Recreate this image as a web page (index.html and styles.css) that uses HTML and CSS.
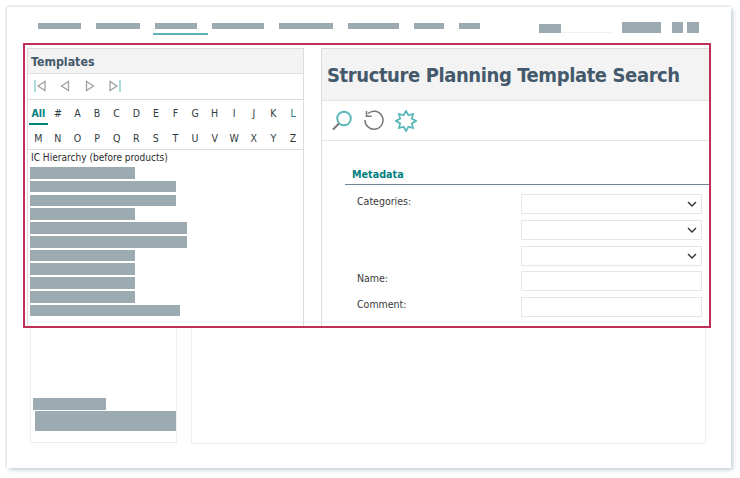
FILE: index.html
```html
<!DOCTYPE html>
<html lang="en">
<head>
<meta charset="utf-8">
<title>Structure Planning Template Search</title>
<link rel="stylesheet" href="styles.css">
</head>
<body>
<div class="sheet">
  <header class="topnav">
    <span class="tab t1"></span>
    <span class="tab t2"></span>
    <span class="tab-active"><span class="tab t3"></span></span>
    <span class="tab t4"></span>
    <span class="tab t5"></span>
    <span class="tab t6"></span>
    <span class="tab t7"></span>
    <span class="tab t8"></span>
    <span class="searchbox"><span class="searchfill"></span></span>
    <span class="btn b1"></span>
    <span class="btn b2"></span>
    <span class="btn b3"></span>
  </header>

  <main class="focus">
    <section class="left">
      <div class="left-head">Templates</div>
      <div class="pager">
        <svg class="pg" width="12" height="12" viewBox="0 0 12 12"><path class="teal" d="M1 0v12"/><path class="gray" d="M11 1.500v9L4 6z"/></svg>
        <svg class="pg" width="12" height="12" viewBox="0 0 12 12"><path class="gray" d="M9.500 1.500v9L2.500 6z"/></svg>
        <svg class="pg" width="12" height="12" viewBox="0 0 12 12"><path class="gray" d="M2.500 1.500v9L9.500 6z"/></svg>
        <svg class="pg" width="12" height="12" viewBox="0 0 12 12"><path class="gray" d="M1 1.500v9L8 6z"/><path class="teal" d="M11 0v12"/></svg>
      </div>
      <nav class="alpha">
        <a class="letter all">All</a><a class="letter">#</a><a class="letter">A</a><a class="letter">B</a><a class="letter">C</a><a class="letter">D</a><a class="letter">E</a><a class="letter">F</a><a class="letter">G</a><a class="letter">H</a><a class="letter">I</a><a class="letter">J</a><a class="letter">K</a><a class="letter tl">L</a>
        <a class="letter">M</a><a class="letter">N</a><a class="letter">O</a><a class="letter">P</a><a class="letter">Q</a><a class="letter">R</a><a class="letter">S</a><a class="letter">T</a><a class="letter">U</a><a class="letter">V</a><a class="letter">W</a><a class="letter">X</a><a class="letter">Y</a><a class="letter">Z</a>
      </nav>
      <div class="tree">
        <div class="tree-title">IC Hierarchy (before products)</div>
        <div class="bars">
          <span class="bar s"></span>
          <span class="bar m"></span>
          <span class="bar m"></span>
          <span class="bar s"></span>
          <span class="bar l"></span>
          <span class="bar l"></span>
          <span class="bar s"></span>
          <span class="bar s"></span>
          <span class="bar s"></span>
          <span class="bar s"></span>
          <span class="bar x"></span>
        </div>
      </div>
    </section>

    <section class="right">
      <div class="right-head"><h1>Structure Planning Template Search</h1></div>
      <div class="tools">
        <svg width="22" height="22" viewBox="0 0 22 22"><circle class="ic-teal" cx="13" cy="8.500" r="6.800"/><path class="ic-handle" d="M8 13.500L2 19.500"/></svg>
        <svg width="22" height="22" viewBox="0 0 22 22"><path class="ic-gray" d="M5 3.500A9 9 0 1 1 2 10"/><path class="ic-gray" d="M3.500 1v5.200h5.200"/></svg>
        <svg width="22" height="22" viewBox="0 0 22 22"><path class="ic-star" d="M11 1L13.400 5.200 18.070 3.930 16.800 8.600 21 11 16.800 13.400 18.070 18.070 13.400 16.800 11 21 8.600 16.800 3.930 18.070 5.200 13.400 1 11 5.200 8.600 3.930 3.930 8.600 5.200z"/></svg>
      </div>
      <div class="meta">
        <h2>Metadata</h2>
        <div class="form">
          <label class="lbl">Categories:</label>
          <div class="field sel"><svg width="10" height="6" viewBox="0 0 10 6"><path d="M1 1l4 4 4-4"/></svg></div>
          <div class="field sel col2"><svg width="10" height="6" viewBox="0 0 10 6"><path d="M1 1l4 4 4-4"/></svg></div>
          <div class="field sel col2"><svg width="10" height="6" viewBox="0 0 10 6"><path d="M1 1l4 4 4-4"/></svg></div>
          <label class="lbl">Name:</label>
          <div class="field"></div>
          <label class="lbl">Comment:</label>
          <div class="field"></div>
        </div>
      </div>
    </section>
  </main>

  <div class="lower">
    <div class="card card-a">
      <span class="cbar c1"></span>
      <span class="cbar c2"></span>
    </div>
    <div class="card card-b"></div>
  </div>
</div>
</body>
</html>
```
FILE: styles.css
```css
* { box-sizing: border-box; }
html, body { margin: 0; height: 100%; }
body {
  width: 740px;
  height: 478px;
  padding: 7px 9px 10px 7px;
  background: #fff;
  font-family: "DejaVu Sans", sans-serif;
  font-stretch: condensed;
  overflow: hidden;
}
.sheet {
  height: 461px;
  background: #fff;
  box-shadow: 2px 2px 4px #c3d0d5, -1px -1px 2px #d8e0e3;
  padding: 0 20px 0 16px;
  display: flex;
  flex-direction: column;
}

/* top nav */
.topnav {
  height: 36px;
  flex: none;
  display: flex;
  align-items: flex-start;
  padding: 16px 0 0 15px;
}
.tab { height: 6px; background: #9cabb1; flex: none; }
.t1 { width: 43px; margin-right: 15px; }
.t2 { width: 44px; margin-right: 13px; }
.t3 { width: 42px; display: block; }
.t4 { width: 52px; margin-right: 15px; }
.t5 { width: 54px; margin-right: 15px; }
.t6 { width: 51px; margin-right: 15px; }
.t7 { width: 30px; margin-right: 15px; }
.t8 { width: 21px; }
.tab-active {
  width: 55px;
  height: 12px;
  padding-left: 2px;
  margin-right: 4px;
  border-bottom: 2px solid #62b3b5;
  flex: none;
}
.searchbox {
  width: 72px;
  height: 10px;
  margin: 0 11px 0 59px;
  border-bottom: 1px solid #eef0f1;
  flex: none;
}
.searchfill { display: block; width: 22px; height: 9px; background: #9cabb1; margin-top: 1px; }
.btn { height: 11px; margin-top: -1px; background: #9cabb1; flex: none; }
.b1 { width: 39px; margin-right: 11px; }
.b2 { width: 11px; margin-right: 4px; }
.b3 { width: 12px; }

/* red frame */
.focus {
  height: 285px;
  flex: none;
  border: 2px solid #bf3058;
  padding: 3px 0 0 2px;
  display: flex;
  overflow: hidden;
  background: #fff;
}
.left {
  width: 277px;
  flex: none;
  border: 1px solid #dcdcdc;
  border-bottom: 0;
  display: flex;
  flex-direction: column;
}
.left-head {
  height: 25px;
  flex: none;
  background: #f3f3f3;
  border-bottom: 1px solid #e0e0e0;
  padding: 4px 0 0 3px;
  font-size: 12.300px;
  line-height: 18px;
  font-weight: 700;
  color: #44596b;
}
.pager {
  height: 26px;
  flex: none;
  border-bottom: 1px solid #dcdcdc;
  display: flex;
  align-items: center;
  gap: 13px;
  padding: 0 0 2px 6px;
}
.pg { display: block; }
.gray { fill: none; stroke: #a0a0a0; stroke-width: 1.300; }
.teal { fill: none; stroke: #7fcaca; stroke-width: 1.300; }
.alpha {
  height: 50px;
  flex: none;
  border-bottom: 1px solid #dcdcdc;
  display: grid;
  grid-template-columns: repeat(14, 19.600px);
  grid-auto-rows: 25px;
  padding-left: 0.500px;
}
.letter {
  font-size: 10.500px;
  line-height: 27px;
  text-align: center;
  color: #2f3a40;
}
.all {
  font-weight: 700;
  color: #00807f;
  box-shadow: inset 0 -2px 0 #00807f;
  height: 25px;
  line-height: 26px;
}
.tl { color: #1c7e86; }
.tree { flex: 1; padding: 1px 0 0 2px; }
.tree-title {
  font-size: 10.050px;
  line-height: 14px;
  color: #2b2b2b;
  padding-left: 1px;
}
.bars { display: flex; flex-direction: column; gap: 2.200px; margin-top: 2px; }
.bar { display: block; height: 11.600px; background: #9cabb1; }
.s { width: 105px; }
.m { width: 146px; }
.l { width: 156.500px; }
.x { width: 150px; }

.right {
  margin-left: 17px;
  flex: 1;
  border-left: 1px solid #dcdcdc;
  border-top: 1px solid #dcdcdc;
  display: flex;
  flex-direction: column;
}
.right-head {
  height: 52px;
  flex: none;
  background: #f3f3f3;
  border-bottom: 1px solid #e4e4e4;
  padding: 0 0 0 5px;
  display: flex;
  align-items: center;
}
h1 {
  margin: 0;
  font-size: 20px;
  letter-spacing: -0.400px;
  font-weight: 700;
  color: #44596b;
  white-space: nowrap;
}
.tools {
  height: 40px;
  flex: none;
  border-bottom: 1px solid #e4e4e4;
  display: flex;
  align-items: center;
  gap: 10px;
  padding: 0 0 0 9px;
}
.ic-teal { fill: none; stroke: #57b5b6; stroke-width: 1.900; }
.ic-star { fill: none; stroke: #57b5b6; stroke-width: 1.700; }
.ic-handle { fill: none; stroke: #777; stroke-width: 2; }
.ic-gray { fill: none; stroke: #777; stroke-width: 1.500; }
.meta { padding: 25px 0 0 23px; }
h2 {
  margin: 0;
  height: 19px;
  border-bottom: 1px solid #6f8794;
  padding-left: 7px;
  font-size: 10.700px;
  line-height: 17px;
  font-weight: 700;
  color: #00807f;
}
.form {
  display: grid;
  grid-template-columns: 176px 181px;
  grid-auto-rows: 20px;
  row-gap: 5.600px;
  padding: 9.400px 0 0 0;
}
.lbl {
  grid-column: 1;
  padding-left: 12px;
  font-size: 10.500px;
  line-height: 14px;
  color: #3a3a3a;
}
.field {
  grid-column: 2;
  border: 1px solid #e4e6e7;
  background: #fff;
}
.col2 { grid-column: 2; }
.sel { display: flex; align-items: center; justify-content: flex-end; padding-right: 4px; }
.sel path { fill: none; stroke: #333; stroke-width: 1.400; }

/* behind */
.lower {
  flex: none;
  display: flex;
  padding-left: 7px;
  align-items: flex-start;
}
.card { border: 1px solid #eeeeee; border-top: 0; }
.card-a {
  width: 147px;
  height: 115px;
  margin-right: 14px;
  display: flex;
  flex-direction: column;
  justify-content: flex-end;
  padding-bottom: 11px;
}
.card-b { width: 515px; height: 116px; }
.cbar { display: block; background: #9cabb1; }
.c1 { width: 73px; height: 12px; margin-left: 2px; }
.c2 { width: 141px; height: 20px; margin: 1px 0 0 4px; }
```
